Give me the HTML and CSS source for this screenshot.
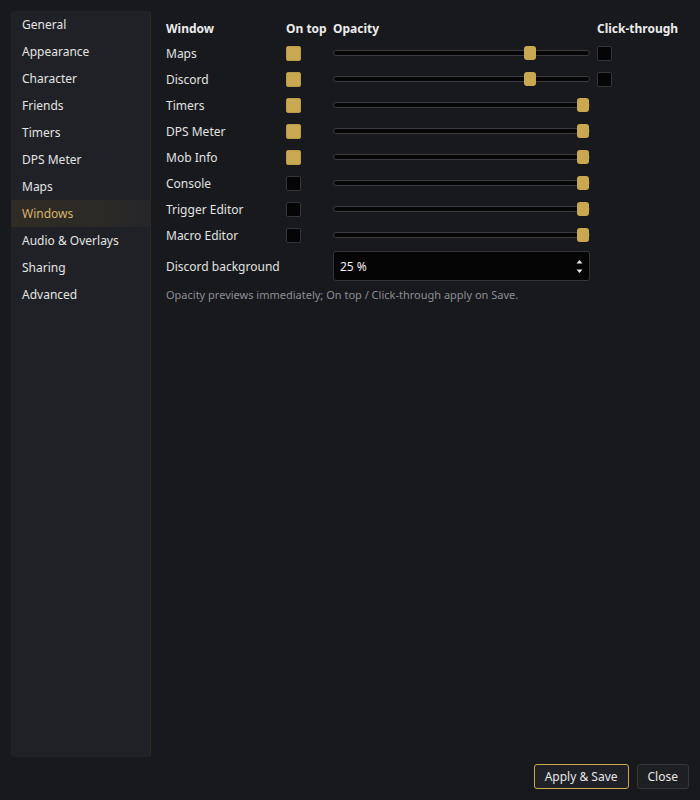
FILE: index.html
```html
<!DOCTYPE html>
<html>
<head>
<meta charset="utf-8">
<link rel="stylesheet" href="styles.css">
</head>
<body>
<div class="app">
  <div class="main">
    <nav class="sidebar">
      <div class="nav-item">General</div>
      <div class="nav-item">Appearance</div>
      <div class="nav-item">Character</div>
      <div class="nav-item">Friends</div>
      <div class="nav-item">Timers</div>
      <div class="nav-item">DPS Meter</div>
      <div class="nav-item">Maps</div>
      <div class="nav-item active">Windows</div>
      <div class="nav-item">Audio &amp; Overlays</div>
      <div class="nav-item">Sharing</div>
      <div class="nav-item">Advanced</div>
    </nav>
    <section class="content">
      <div class="grid">
        <div class="hdr">Window</div>
        <div class="hdr">On top</div>
        <div class="hdr">Opacity</div>
        <div class="hdr ct">Click-through</div>

        <div class="lbl">Maps</div>
        <div class="cell"><span class="cb on"></span></div>
        <div class="cell"><div class="slider"><span class="thumb" style="left:calc(0.78 * (100% - 12px))"></span></div></div>
        <div class="cell ct"><span class="cb"></span></div>

        <div class="lbl">Discord</div>
        <div class="cell"><span class="cb on"></span></div>
        <div class="cell"><div class="slider"><span class="thumb" style="left:calc(0.78 * (100% - 12px))"></span></div></div>
        <div class="cell ct"><span class="cb"></span></div>

        <div class="lbl">Timers</div>
        <div class="cell"><span class="cb on"></span></div>
        <div class="cell"><div class="slider"><span class="thumb" style="left:calc(100% - 12px)"></span></div></div>
        <div class="cell"></div>

        <div class="lbl">DPS Meter</div>
        <div class="cell"><span class="cb on"></span></div>
        <div class="cell"><div class="slider"><span class="thumb" style="left:calc(100% - 12px)"></span></div></div>
        <div class="cell"></div>

        <div class="lbl">Mob Info</div>
        <div class="cell"><span class="cb on"></span></div>
        <div class="cell"><div class="slider"><span class="thumb" style="left:calc(100% - 12px)"></span></div></div>
        <div class="cell"></div>

        <div class="lbl">Console</div>
        <div class="cell"><span class="cb"></span></div>
        <div class="cell"><div class="slider"><span class="thumb" style="left:calc(100% - 12px)"></span></div></div>
        <div class="cell"></div>

        <div class="lbl">Trigger Editor</div>
        <div class="cell"><span class="cb"></span></div>
        <div class="cell"><div class="slider"><span class="thumb" style="left:calc(100% - 12px)"></span></div></div>
        <div class="cell"></div>

        <div class="lbl">Macro Editor</div>
        <div class="cell"><span class="cb"></span></div>
        <div class="cell"><div class="slider"><span class="thumb" style="left:calc(100% - 12px)"></span></div></div>
        <div class="cell"></div>
      </div>
      <div class="bgrow">
        <div class="bglabel">Discord background</div>
        <div class="spin">
          <span class="spin-val">25 %</span>
          <span class="arrows">
            <svg width="7" height="5" viewBox="0 0 7 5"><path d="M0.5 4.5 L3.5 1 L6.5 4.5 Z" fill="#e8e8e8"/></svg>
            <svg width="7" height="5" viewBox="0 0 7 5"><path d="M0.5 0.5 L3.5 4 L6.5 0.5 Z" fill="#e8e8e8"/></svg>
          </span>
        </div>
      </div>
      <div class="hint">Opacity previews immediately; On top / Click-through apply on Save.</div>
    </section>
  </div>
  <footer class="footer">
    <button class="btn primary">Apply &amp; Save</button>
    <button class="btn">Close</button>
  </footer>
</div>
</body>
</html>
```

FILE: styles.css
```css
html, body {
  margin: 0;
  padding: 0;
  background: #18191d;
  font-family: "Noto Sans", "Open Sans", sans-serif;
  font-size: 12px;
  color: #e2e2e2;
}
.app {
  width: 700px;
  height: 800px;
  box-sizing: border-box;
  padding: 11px 11px 0 11px;
  display: flex;
  flex-direction: column;
}
.main {
  display: flex;
  height: 746px;
  gap: 15px;
}
.sidebar {
  width: 139px;
  background: #202126;
  border-right: 1px solid #2e2a1e;
  border-radius: 3px;
  box-sizing: content-box;
}
.nav-item {
  height: 27px;
  line-height: 27px;
  padding-left: 11px;
  color: #e4e4e4;
}
.nav-item.active {
  color: #d6b36c;
  background: linear-gradient(90deg, #302c24 0%, #2c2a26 60%, #26262a 100%);
}
.content {
  flex: 1;
  padding-top: 5px;
}
.grid {
  display: grid;
  grid-template-columns: 120px 47px 257px auto;
  grid-auto-rows: 26px;
  grid-template-rows: 24px;
  align-items: center;
}
.hdr {
  font-weight: bold;
  color: #ececec;
}
.ct {
  padding-left: 7px;
}
.lbl {
  color: #e2e2e2;
}
.cell {
  display: flex;
  align-items: center;
}
.cb {
  display: block;
  width: 13px;
  height: 13px;
  border: 1px solid #34353a;
  border-radius: 2px;
  background: #050505;
}
.cb.on {
  background: #c9a852;
  border-color: #b89a4c;
}
.slider {
  position: relative;
  width: 257px;
  height: 6px;
  box-sizing: border-box;
  background: #060606;
  border: 1px solid #3a3b40;
  border-radius: 3px;
}
.thumb {
  position: absolute;
  top: -5px;
  width: 12px;
  height: 14px;
  background: #c9a852;
  border-radius: 3px;
}
.bgrow {
  display: flex;
  align-items: center;
  margin-top: 3px;
}
.bglabel {
  width: 167px;
}
.spin {
  width: 257px;
  height: 30px;
  box-sizing: border-box;
  background: #050505;
  border: 1px solid #34353a;
  border-radius: 3px;
  display: flex;
  align-items: center;
  justify-content: space-between;
  padding: 0 6px 0 6px;
}
.spin-val {
  color: #f0f0f0;
}
.arrows {
  display: flex;
  flex-direction: column;
  gap: 5px;
}
.arrows svg {
  display: block;
}
.hint {
  margin-top: 6px;
  font-size: 11px;
  color: #8c8d92;
}
.footer {
  display: flex;
  justify-content: flex-end;
  gap: 8px;
  padding-top: 7px;
}
.btn {
  font-family: "Noto Sans", "Open Sans", sans-serif;
  font-size: 12px;
  color: #e6e6e6;
  background: #1e1f23;
  border: 1px solid #35363b;
  border-radius: 3px;
  height: 25px;
  padding: 0 10px;
}
.btn.primary {
  border-color: #c9a852;
  background: #202126;
}
```
